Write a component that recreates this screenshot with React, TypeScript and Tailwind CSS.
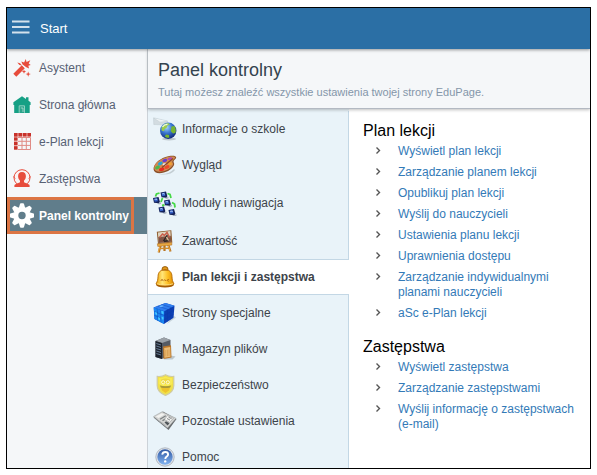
import type { ReactNode } from "react";
import { clsx } from "clsx";

function MenuIcon() {
  return (
    <svg width="18" height="14" viewBox="0 0 18 14" aria-hidden="true">
      <path d="M0 1.5h17.5M0 7h17.5M0 12.5h17.5" stroke="#d3e1ec" strokeWidth="1.8" />
    </svg>
  );
}

function WandIcon() {
  return (
    <svg width="18" height="18" viewBox="0 0 18 18" fill="#e74c3c" aria-hidden="true">
      <path d="M.3 14.8 8.800 6.300l3 3L3.300 17.800z" />
      <path d="M9.600 5.500 8.300 2.600l2.800.9L12.800 0l.7 2.900L17.300 1.300l-1.600 3.300 2 1.300-2.400.9.8 2.800-2.800-1.400z" />
      <path d="M4.300 3.500 7 4.300l2 2.200-2.600-.6zM11 10.500l.6 1.500 1.500.6-1.500.6-.6 1.500-.6-1.500-1.500-.6 1.500-.6zM15.200 12.600l.7 1.900 1.900.6-1.900.7-.7 1.900-.7-1.900-1.900-.7 1.900-.6z" />
      <path d="m9.300 6.200 2.600 2.600" stroke="#f5f7f9" strokeWidth=".8" />
    </svg>
  );
}

function HomeIcon() {
  return (
    <svg width="18" height="17" viewBox="0 0 18 17" aria-hidden="true">
      <path d="M9 .2 13 3V1.300h2.500v3.400L17.600 6.300v2.800h-.9V17H1.200V9.100H.4V6.300z" fill="#16a085" />
      <path d="M6.200 16.800V9.800h5.300v7" fill="#2ea48c" stroke="#8fd0c1" strokeWidth="1" />
      <path d="M7.800 12h2.200v4" fill="none" stroke="#b9dfd7" strokeWidth=".8" />
    </svg>
  );
}

function TimetableIcon() {
  return (
    <svg width="17" height="17" viewBox="0 0 17 17" aria-hidden="true">
      <path d="M0 0h17v3.500H0zM0 3.500h3.500V17H0z" fill="#e9a8a3" />
      <path d="M4 4.500h12.500v12H4M8 4.500v12M12.300 4.500v12M4 8.300h12.500M4 12.400h12.500" fill="none" stroke="#e08b85" strokeWidth="1" />
      <path d="M0 0h3.500v3.500H0zM4.500 0H8v3.500H4.500zM9 0h3.500v3.500H9zM13.500 0H17v3.500h-3.500zM0 4.600h3.500v3H0zM0 8.900h3.500v3H0zM0 13.200h3.500v3.300H0z" fill="#c8322b" />
    </svg>
  );
}

function SubstitutionIcon() {
  return (
    <svg width="18" height="19" viewBox="0 0 18 19" aria-hidden="true">
      <circle cx="9" cy="8.700" r="8" fill="#fbf3f3" stroke="#e74c3c" strokeWidth="1" />
      <path d="M9 3c2.800 0 4 1.800 3.900 4.600-.1 1.800-.9 3.200-1.900 4.100v1.600l5 2.300c.4.200.6.600.6 1V18H1.400v-1.400c0-.4.200-.8.6-1l5-2.300v-1.600C6 10.800 5.200 9.400 5.100 7.600 5 4.800 6.200 3 9 3z" fill="#e74c3c" />
      <path d="m.2 7.400 2 2.100M17.800 7.400l-2 2.100" stroke="#e74c3c" strokeWidth="1" />
    </svg>
  );
}

function GearIcon() {
  return (
    <svg width="24" height="25" viewBox="-12 -12.500 24 25" fill="#fff" aria-hidden="true">
      <path
        fillRule="evenodd"
        d="M0-8.500A8.500 8.500 0 1 1 0 8.500 8.500 8.500 0 1 1 0-8.500zM0-3.700A3.700 3.700 0 1 0 0 3.700 3.700 3.700 0 1 0 0-3.700z"
      />
      {[0, 45, 90, 135, 180, 225, 270, 315].map((angle) => (
        <path
          key={angle}
          d="M-3.200-7.500-2-11.600Q-1.800-12.300-1.100-12.300H1.100Q1.800-12.300 2-11.600L3.200-7.500z"
          transform={`rotate(${angle})`}
        />
      ))}
    </svg>
  );
}

function SchoolInfoIcon() {
  return (
    <svg width="24" height="24" viewBox="0 0 24 24" aria-hidden="true">
      <defs>
        <radialGradient id="globe" cx=".4" cy=".3" r=".75">
          <stop offset="0" stopColor="#a8d6f8" />
          <stop offset=".45" stopColor="#3a78d2" />
          <stop offset="1" stopColor="#0d2070" />
        </radialGradient>
      </defs>
      <ellipse cx="16" cy="22" rx="7" ry="1.500" fill="#bdc8ce" />
      <path d="m.5.800 14 3.200v4L.8 7.500z" fill="#d3dce1" stroke="#bfcbd1" strokeWidth=".5" />
      <path d="m1 1.200 6 4 7.500-1" fill="#eef3f5" stroke="#bfcbd1" strokeWidth=".5" />
      <circle cx="15.200" cy="13.700" r="8.200" fill="url(#globe)" />
      <path d="M8.800 10c1.400-2.700 4-4 6.700-3.800l1.500 1.300-2.500 1-1 2.500-2 1-.5 2.300-2.400-.8c-.2-1.400-.1-2.500.2-3.500z" fill="#9ccb4a" />
      <path d="m18.500 9.500 3-.5c1.400 2.300 1.600 4.700.9 7L20 16.500l-2.200-2.200zM13 17.500l3 .5.3 2.800c-2 .2-3.500-.3-4.500-1.300z" fill="#78b52f" />
      <path d="M9.500 10c1.300-2 3.200-2.800 5-2.700" fill="none" stroke="#f2fbe0" strokeWidth="1.300" />
    </svg>
  );
}

function PaletteIcon() {
  return (
    <svg width="24" height="20" viewBox="0 0 24 20" aria-hidden="true">
      <path d="M6 19c7 .5 12-1.500 15-5l1 1c-3 4-9 5.500-16 4z" fill="#c3cdd2" />
      <path d="M.6 14.500C.2 10 5 4.500 12.500 2 17.500.3 23 .2 23.200 2.400c.1 1.600-2.800 2.600-2.700 4.200.1 1.500 1.400 2 .3 4-2.100 4.200-8.300 7.700-14.300 7.700-3.500 0-5.600-1.400-5.900-3.800z" fill="#8a4f28" />
      <path d="M1.200 13.300C1 9 6 4.600 13 2.500c4.500-1.400 8.800-1.500 9 0 .2 1.400-2.600 2.200-2.700 3.900-.1 1.400 1.600 1.900.6 3.600-2.200 3.700-7.800 6.700-13.200 6.700-3.300 0-5.300-1.200-5.500-3.400z" fill="#d08a52" />
      <ellipse cx="4.500" cy="12.500" rx="2.500" ry="1.700" fill="#4cb84a" transform="rotate(-25 4.500 12.500)" />
      <ellipse cx="7.300" cy="8.500" rx="2.500" ry="1.600" fill="#25a5d8" transform="rotate(-25 7.300 8.500)" />
      <ellipse cx="11.800" cy="5.500" rx="2.500" ry="1.600" fill="#6a3ed0" transform="rotate(-20 11.800 5.500)" />
      <ellipse cx="17" cy="3.700" rx="2.400" ry="1.300" fill="#b04bb0" transform="rotate(-12 17 3.700)" />
      <ellipse cx="8.700" cy="14.300" rx="2.800" ry="1.700" fill="#e52d22" transform="rotate(-12 8.700 14.300)" />
      <ellipse cx="14" cy="12" rx="2.600" ry="1.700" fill="#ef4a27" transform="rotate(-25 14 12)" />
      <ellipse cx="17" cy="8.700" rx="2" ry="1.600" fill="#f1a032" />
      <ellipse cx="11.500" cy="9.500" rx="1.800" ry="1.200" fill="#e8eff3" />
      <path d="m9 12.500 11-9" stroke="#8c4628" strokeWidth="1.200" />
    </svg>
  );
}

function ModulesIcon() {
  return (
    <svg width="24" height="25" viewBox="0 0 24 25" aria-hidden="true">
      <path d="m2.500 5.500 1-2.500 3-1M14.500 2.500l2.500 1 1 3.500M9.500 7l-1.500 4M19 11.500l2.500 1.500.5 3.500M11.500 14 9 14.500" fill="none" stroke="#45d845" strokeWidth="1.800" />
      {[
        [7.500, 0.500],
        [0, 6],
        [11, 8.500],
        [5.500, 15.500],
        [15.500, 18],
      ].map(([x, y]) => (
        <g key={`${x}-${y}`} transform={`translate(${x} ${y})`}>
          <path d="M4 6.500 8 5.300v1.500L6 7.500z" fill="#aab6c0" />
          <path d="m0 1 5.500-1 1.400 4.800-1.200 1.400L1 5.700z" fill="#14225a" />
          <path d="m1 1.700 3.200-.6.700 3.200-3.200.4z" fill="#3460c8" />
          <path d="m1.600 2.400 2-.4.200 1" fill="none" stroke="#c4dcff" strokeWidth=".8" />
        </g>
      ))}
    </svg>
  );
}

function EaselIcon() {
  return (
    <svg width="18" height="25" viewBox="0 0 18 25" aria-hidden="true">
      <path d="m5 15-2.300 8.500M12 15l2.500 7.500M8.500 15v7" stroke="#b87420" strokeWidth="2.200" />
      <path d="m4.500 15-2.200 8M11.700 15l2.300 7" stroke="#f0b04c" strokeWidth="1" />
      <path d="m.8 2.800 14.500-1.600 1 12.300L2 15z" fill="#8e5a2b" />
      <path d="m1.800 3.500 12.600-1.400.8 10.700L2.900 14z" fill="#ded4bf" />
      <path d="m2.300 8 12.500-1.300.5 6L2.900 14z" fill="#805343" />
      <path d="m3.500 8.500 3-3.500 2 1.500 2.500-3 2.500 5" fill="none" stroke="#c8604c" strokeWidth="1.600" />
      <path d="m7.500 12 3.800-6M8 12.500l4.500-1" stroke="#2c2625" strokeWidth="1.400" />
      <path d="m10.500 8 2 3.500" stroke="#d9c9a4" strokeWidth="1.200" />
      <path d="m1.300 14.800 14.500-1.300v2.600L1.800 17.500z" fill="#e9a840" stroke="#a9681e" strokeWidth=".5" />
      <path d="m4 19.500 9-.3" stroke="#cf8b2d" strokeWidth="1.400" />
    </svg>
  );
}

function BellIcon() {
  return (
    <svg width="20" height="22" viewBox="0 0 20 22" aria-hidden="true">
      <defs>
        <linearGradient id="bell" x1="0" x2="1">
          <stop offset="0" stopColor="#f0a000" />
          <stop offset=".35" stopColor="#ffe67a" />
          <stop offset=".65" stopColor="#fdbf22" />
          <stop offset="1" stopColor="#dc8500" />
        </linearGradient>
      </defs>
      <ellipse cx="10" cy="18.800" rx="9" ry="2.800" fill="#a45a04" />
      <ellipse cx="10" cy="3.200" rx="3" ry="2.600" fill="#e29a1a" stroke="#8f5305" strokeWidth=".9" />
      <path d="M10 3.700c4.700 0 6.900 2.600 7 7 .1 3.500.6 4.700 2 7-2.700 2.600-15.300 2.600-18 0 1.400-2.300 1.900-3.500 2-7 .1-4.400 2.300-7 7-7z" fill="url(#bell)" stroke="#b66a00" strokeWidth=".9" />
      <path d="M6 14.800c.2-1.800 2-1.800 2 0M8.800 14.500c1-1.300 2.200-.3 1.700.5M14 13.700c-1.800-.9-2.600 1.500-.3 1.500M7.500 4.500c1.600-.6 3.400-.6 5 0" fill="none" stroke="#a85b0a" strokeWidth=".9" />
      <path d="M2 17.800c4 1.600 12 1.600 16 0" fill="none" stroke="#ffe184" strokeWidth="1" />
    </svg>
  );
}

function CubeIcon() {
  return (
    <svg width="24" height="23" viewBox="0 0 24 23" aria-hidden="true">
      <path d="m20 13 3 2.500-9 6.500z" fill="#c7d3da" />
      <path d="M.7 5.500 12.500 1l9 2.800-1 12L11 22 1.500 17z" fill="#0b3fb4" />
      <path d="m.7 5.500 11.800-4.500 9 2.800-10.300 5.400z" fill="#2f7ff0" />
      <path d="m.7 5.500 10.500 3.700L11 22 1.500 17z" fill="#1a86f2" />
      <path d="m4.500 4 10.300 3.400M8.500 2.500l9.700 3M4.200 6.800l.6 11.800M7.700 8l.3 12.400M14.500 7.400v12.200M18 5.700l-.5 12M1 9.500l10.100 4 10-5.500M1.300 13.300l9.800 4.400 9.700-5.600" fill="none" stroke="#0a37a6" strokeOpacity=".55" strokeWidth=".7" />
      <path d="m2 10 2 .8 .3 2.400-2-.9zM8.300 8.800l2.200.8v2.700l-2-.8zM8.500 14.500l2 .8v2.800l-1.900-.9zM5 15l2 .9v2.500l-1.800-.9z" fill="#43c8ff" />
      <path d="m6 4.500 3-1.200 2 .7-3 1.200z" fill="#69b6ff" />
    </svg>
  );
}

function ServerIcon() {
  return (
    <svg width="22" height="24" viewBox="0 0 22 24" aria-hidden="true">
      <path d="m15 18 6.500 1.500-3 3h-9z" fill="#bcc7cd" />
      <path d="M1.500 4 10 .5l6.500 2.500v14L8 22l-6.500-2z" fill="#555b64" />
      <path d="M1.500 4 10 .5l6.500 2.500L8 6z" fill="#9aa1a8" />
      <path d="M1.500 4 8 6v16l-6.500-2z" fill="#1d232d" />
      <path d="m2.300 6.500 4.700 1.500M2.300 9l4.700 1.500M2.300 11.500l4.700 1.500M2.300 14l4.700 1.500M2.300 16.500l4.700 1.500" stroke="#6d84a0" strokeWidth=".9" />
      <path d="m9 9.500 8-1.200.5 12.200-8 1.500z" fill="#b9762a" />
      <path d="m10.200 11 6-1 .3 9.800-6 1z" fill="#ecbb73" />
      <path d="M11.800 13v6.500M13.500 12.700v6.500M15 12.500V19" stroke="#d39a4b" strokeWidth=".7" />
    </svg>
  );
}

function ShieldIcon() {
  return (
    <svg width="19" height="22" viewBox="0 0 19 22" aria-hidden="true">
      <path d="M9.500.7c2.500 1.600 5 2 8.300 1.700v9c0 4.800-3.500 8-8.300 10-4.800-2-8.300-5.200-8.300-10v-9C4.500 2.700 7 2.300 9.500.7z" fill="#f0e04a" stroke="#cfcba5" strokeWidth="1.200" />
      <path d="M9.500 2.500c2 1.100 4 1.500 6.700 1.500v6c-4 3-9 3-13.400 0V4c2.700 0 4.700-.4 6.700-1.500z" fill="#f8ea55" />
      <path d="M5 5.500c3.500-1.200 6-1.200 9 0l-.5 4.500h-8z" fill="#eed943" />
      <circle cx="7.200" cy="8.300" r="1.600" fill="none" stroke="#fffce0" strokeWidth=".9" />
      <circle cx="11.800" cy="8.300" r="1.600" fill="none" stroke="#fffce0" strokeWidth=".9" />
      <path d="M4.500 12h10l-1.500 4.500L9.500 19 6 16.500z" fill="#eec32c" />
      <path d="M4 11.500c3.500 1 7.500 1 11 0l-.8 2c-3 .8-6.400.8-9.400 0z" fill="#a99b3a" />
    </svg>
  );
}

function SettingsIcon() {
  return (
    <svg width="24" height="20" viewBox="0 0 24 20" aria-hidden="true">
      <path d="m.5 6.500 9.500-6 13.500 7.500-8 11z" fill="#66696c" />
      <path d="M.5 5.500 9 .8l14 6.500-8.500 9.700z" fill="#d5d6d5" stroke="#999d9d" strokeWidth=".5" />
      <path d="m2.800 5.600 6-3.400 2.700 1.300-6 3.400z" fill="#f2f2f0" />
      <path d="m7 8.200 5.800-3.500M9.500 9.700l2.500-1.600" stroke="#7c8082" strokeWidth="1.300" />
      <path d="m14.500 4.500 6 3-4 3.800-5-2.800z" fill="#f4f4f2" stroke="#8a8e90" strokeWidth=".5" />
      <path d="m15.500 6.200 3.200 1.600M14 7.500l3 1.600" stroke="#6b6f72" strokeWidth=".8" />
      <path d="m11.500 11.500 1.500-1.300 3.500 2-1.800 2.300z" fill="#4f5458" />
      <path d="m3.500 8.200 10 6.500" stroke="#a8abac" strokeWidth=".7" />
    </svg>
  );
}

function HelpIcon() {
  return (
    <svg width="20" height="20" viewBox="0 0 20 20" aria-hidden="true">
      <defs>
        <linearGradient id="help" x1="0" x2="0" y1="0" y2="1">
          <stop offset="0" stopColor="#315aa4" />
          <stop offset="1" stopColor="#82b3f0" />
        </linearGradient>
      </defs>
      <circle cx="10" cy="10" r="9.200" fill="#dfe3e9" stroke="#a4abb5" strokeWidth=".8" />
      <circle cx="10" cy="10" r="7.700" fill="url(#help)" />
      <path d="M7.200 7.600C7.500 5.800 8.800 5 10.300 5c1.700 0 2.800 1 2.800 2.400 0 2.200-2.800 2.200-2.800 4.600" fill="none" stroke="#fff" strokeWidth="1.900" />
      <circle cx="10.200" cy="14.400" r="1.200" fill="#fff" />
    </svg>
  );
}

type Item = { label: string; icon: ReactNode };

const navigation: Item[] = [
  { label: "Asystent", icon: <WandIcon /> },
  { label: "Strona główna", icon: <HomeIcon /> },
  { label: "e-Plan lekcji", icon: <TimetableIcon /> },
  { label: "Zastępstwa", icon: <SubstitutionIcon /> },
  { label: "Panel kontrolny", icon: <GearIcon /> },
];

const categories: Item[] = [
  { label: "Informacje o szkole", icon: <SchoolInfoIcon /> },
  { label: "Wygląd", icon: <PaletteIcon /> },
  { label: "Moduły i nawigacja", icon: <ModulesIcon /> },
  { label: "Zawartość", icon: <EaselIcon /> },
  { label: "Plan lekcji i zastępstwa", icon: <BellIcon /> },
  { label: "Strony specjalne", icon: <CubeIcon /> },
  { label: "Magazyn plików", icon: <ServerIcon /> },
  { label: "Bezpieczeństwo", icon: <ShieldIcon /> },
  { label: "Pozostałe ustawienia", icon: <SettingsIcon /> },
  { label: "Pomoc", icon: <HelpIcon /> },
];

const sections = [
  {
    title: "Plan lekcji",
    links: [
      "Wyświetl plan lekcji",
      "Zarządzanie planem lekcji",
      "Opublikuj plan lekcji",
      "Wyślij do nauczycieli",
      "Ustawienia planu lekcji",
      "Uprawnienia dostępu",
      "Zarządzanie indywidualnymi planami nauczycieli",
      "aSc e-Plan lekcji",
    ],
  },
  {
    title: "Zastępstwa",
    links: [
      "Wyświetl zastępstwa",
      "Zarządzanie zastępstwami",
      "Wyślij informację o zastępstwach (e-mail)",
    ],
  },
];

export default function App() {
  return (
    <div className="h-screen bg-white p-1.5 pt-[7px] font-['Liberation_Sans',Arial,sans-serif] text-xs">
      <div className="flex h-full flex-col overflow-hidden border border-black">
        <header className="relative z-20 flex h-[41px] shrink-0 items-center gap-2.5 bg-[#2b6fa5] px-[5px] text-white shadow-[0_1px_3px_rgba(0,0,0,0.4)]">
          <button type="button" aria-label="Menu" className="pb-1">
            <MenuIcon />
          </button>
          <span className="text-[13px]">Start</span>
        </header>

        <div className="flex min-h-0 flex-1">
          <Sidebar />
          <main className="flex min-w-0 flex-1 flex-col">
            <div className="relative z-10 flex h-[60px] shrink-0 flex-col justify-center gap-0.5 border-b border-[#b3b9c2] bg-[#f5f7f9] px-2.5 shadow-[0_1px_3px_rgba(0,0,0,0.25)]">
              <h1 className="text-lg leading-6 text-[#34434f]">Panel kontrolny</h1>
              <p className="text-[11px] leading-4 text-[#8496a9]">
                Tutaj możesz znaleźć wszystkie ustawienia twojej strony EduPage.
              </p>
            </div>
            <div className="flex min-h-0 flex-1">
              <Categories />
              <Links />
            </div>
          </main>
        </div>
      </div>
    </div>
  );
}

function Sidebar() {
  return (
    <nav className="w-[141px] shrink-0 border-r border-[#ccd2d8] bg-[#f5f7f9]">
      {navigation.map(({ label, icon }) => {
        const active = label === "Panel kontrolny";
        return (
          <a
            key={label}
            href="#"
            className={clsx(
              "relative flex h-[37px] items-center gap-1",
              active ? "bg-[#607d8b] font-bold text-white" : "text-[#576174]",
            )}
          >
            <span className="flex w-7 shrink-0 justify-center pl-0.5">{icon}</span>
            <span className="whitespace-nowrap">{label}</span>
            {active && <span className="absolute inset-y-0 left-0 w-[127px] border-[3px] border-[#dc7544]" />}
          </a>
        );
      })}
    </nav>
  );
}

function Categories() {
  return (
    <nav className="w-[201px] shrink-0 bg-[#e9f3f9] pt-0.5">
      {categories.map(({ label, icon }) => (
        <a
          key={label}
          href="#"
          className={clsx(
            "flex items-center gap-1 pl-1 text-[#3d434a]",
            label === "Moduły i nawigacja" ? "h-10" : "h-9",
            label === "Plan lekcji i zastępstwa"
              ? "border-y border-[#c3d7e5] bg-white font-bold"
              : "border-r border-r-[#c3d7e5]",
          )}
        >
          <span className="flex w-[26px] shrink-0 justify-center">{icon}</span>
          <span className="whitespace-nowrap">{label}</span>
        </a>
      ))}
    </nav>
  );
}

function Links() {
  return (
    <div className="min-w-0 flex-1 bg-white pt-3 pr-2 pl-3.5">
      {sections.map(({ title, links }) => (
        <section key={title} className="mb-2.5">
          <h2 className="mb-[3px] text-base leading-5 text-black">{title}</h2>
          <ul>
            {links.map((link) => (
              <li key={link} className="flex pb-1.5 pl-3 leading-[15px]">
                <svg width="6" height="15" viewBox="0 0 6 15" className="mr-[17px] shrink-0" aria-hidden="true">
                  <path d="m1.500 3.500 3 3-3 3" fill="none" stroke="#555" strokeWidth="1.400" />
                </svg>
                <a href="#" className="text-[#337ab7]">
                  {link}
                </a>
              </li>
            ))}
          </ul>
        </section>
      ))}
    </div>
  );
}
